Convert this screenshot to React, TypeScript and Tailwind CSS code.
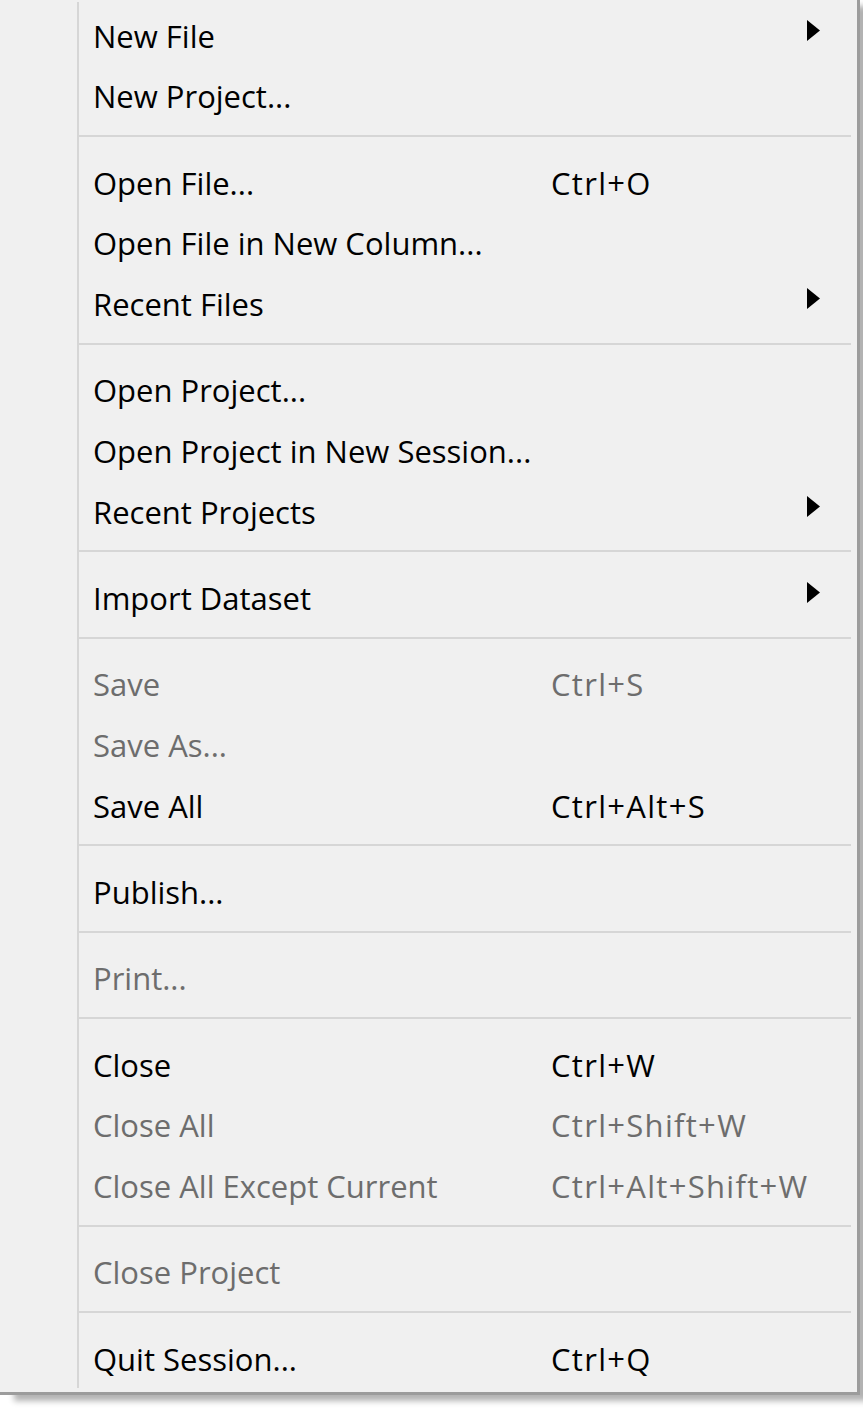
type Item = {
  label: string;
  shortcut?: string;
  submenu?: boolean;
  disabled?: boolean;
};

type Entry = Item | 'sep';

const entries: Entry[] = [
  { label: 'New File', submenu: true },
  { label: 'New Project...' },
  'sep',
  { label: 'Open File...', shortcut: 'Ctrl+O' },
  { label: 'Open File in New Column...' },
  { label: 'Recent Files', submenu: true },
  'sep',
  { label: 'Open Project...' },
  { label: 'Open Project in New Session...' },
  { label: 'Recent Projects', submenu: true },
  'sep',
  { label: 'Import Dataset', submenu: true },
  'sep',
  { label: 'Save', shortcut: 'Ctrl+S', disabled: true },
  { label: 'Save As...', disabled: true },
  { label: 'Save All', shortcut: 'Ctrl+Alt+S' },
  'sep',
  { label: 'Publish...' },
  'sep',
  { label: 'Print...', disabled: true },
  'sep',
  { label: 'Close', shortcut: 'Ctrl+W' },
  { label: 'Close All', shortcut: 'Ctrl+Shift+W', disabled: true },
  { label: 'Close All Except Current', shortcut: 'Ctrl+Alt+Shift+W', disabled: true },
  'sep',
  { label: 'Close Project', disabled: true },
  'sep',
  { label: 'Quit Session...', shortcut: 'Ctrl+Q' },
];

function SubmenuArrow() {
  return (
    <svg width="13" height="21" viewBox="0 0 13 21" className="shrink-0">
      <path d="M0 0 L13 10.5 L0 21 Z" fill="#000" />
    </svg>
  );
}

function MenuRow({ item }: { item: Item }) {
  const color = item.disabled ? 'text-[#6d6d6d]' : 'text-black';
  return (
    <div className={`flex items-center h-[60.6px] pl-[14px] pr-[31px] pt-[8px] ${color}`}>
      <span className="w-[458px] whitespace-nowrap">{item.label}</span>
      <span className="flex-1 whitespace-nowrap tracking-[1.3px]">{item.shortcut}</span>
      {item.submenu && (
        <div className="-mt-[12px]">
          <SubmenuArrow />
        </div>
      )}
    </div>
  );
}

export default function App() {
  return (
    <div className="w-[863px] h-[1408px] bg-white overflow-hidden">
      <div
        className="w-[860px] h-[1395px] bg-[#f0f0f0] border-r-[3px] border-b-[3px] border-[#9c9c9c] shadow-[14px_6px_6px_rgba(0,0,0,0.3)] pt-[2px] text-[31px] leading-none"
        style={{ fontFamily: '"Open Sans", "Noto Sans", sans-serif' }}
      >
        <div className="ml-[77px] h-[1386px] border-l-2 border-[#d6d6d6] pr-[6px]">
          {entries.map((e, i) =>
            e === 'sep' ? (
              <div key={i} className="h-[25.8px] flex items-center">
                <div className="w-full h-[2px] bg-[#d6d6d6]" />
              </div>
            ) : (
              <MenuRow key={i} item={e} />
            )
          )}
        </div>
      </div>
    </div>
  );
}
